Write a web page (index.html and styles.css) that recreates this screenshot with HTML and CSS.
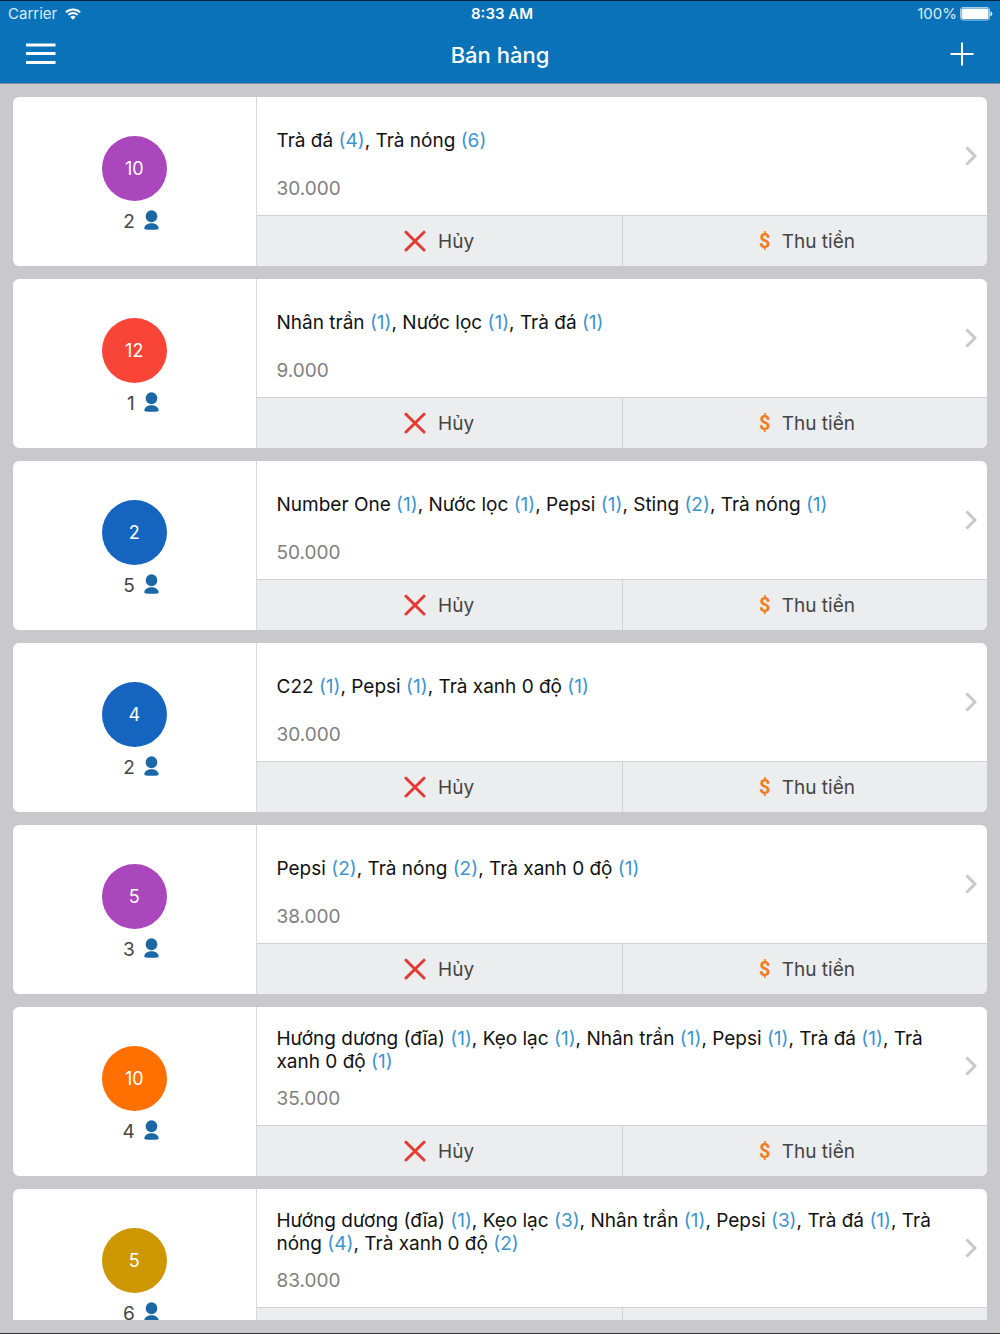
FILE: index.html
```
<!DOCTYPE html>
<html lang="vi">
<head>
<meta charset="utf-8">
<meta name="viewport" content="width=device-width, initial-scale=1">
<title>Bán hàng</title>
<link rel="stylesheet" href="styles.css">
</head>
<body>
<svg class="sprite" width="0" height="0" aria-hidden="true">
  <symbol id="person" viewBox="0 0 15 20"><ellipse cx="7.5" cy="6.3" rx="5.8" ry="6"/><path d="M.3 18C.8 15 3.800 13.200 7.500 13.200s6.700 1.800 7.200 4.800c.1.800-.5 1.300-1.400 1.400-3.800.5-7.800.5-11.600 0-.9-.1-1.500-.6-1.400-1.400z"/></symbol>
  <symbol id="cross" viewBox="0 0 22 22"><path d="M2 2.200l18 17.800M20 2.200L2 20"/></symbol>
  <symbol id="chevron" viewBox="0 0 12 20"><path d="M1.500 1.500L10 10l-8.500 8.500"/></symbol>
</svg>
<div class="app">
  <header class="header">
    <div class="status">
      <span class="status-left">Carrier
        <svg class="wifi" viewBox="0 0 16 12" aria-hidden="true"><path d="M.9 4.300a10.200 10.200 0 0 1 14.200 0M3.400 6.900a6.600 6.600 0 0 1 9.200 0"/><path class="dot" d="M8 11.800L5.300 9a3.900 3.900 0 0 1 5.400 0z"/></svg>
      </span>
      <span class="clock">8:33 AM</span>
      <span class="status-right">100%
        <svg class="battery" viewBox="0 0 33 14" aria-hidden="true"><rect class="shell" x=".5" y=".5" width="29" height="12.500" rx="2.500"/><rect x="1.500" y="1.500" width="27" height="10.500" rx="1.500"/><path d="M30.500 4.500c2.400.7 2.400 4 0 4.700z"/></svg>
      </span>
    </div>
    <nav class="nav">
      <button class="nav-button" type="button" aria-label="Menu"><svg class="menu-icon" viewBox="0 0 30 22"><path d="M0 2h29.500M0 10.500h29.500M0 19.500h29.500"/></svg></button>
      <h1 class="title">Bán hàng</h1>
      <button class="nav-button nav-add" type="button" aria-label="Thêm"><svg class="plus-icon" viewBox="0 0 24 24"><path d="M12 .5v23M.5 12h23"/></svg></button>
    </nav>
  </header>
  <main class="orders">
    <article class="card">
      <div class="table-info"><span class="badge purple">10</span><span class="guests"><span>2</span><svg class="person"><use href="#person"/></svg></span></div>
      <div class="order">
        <a class="detail" href="#"><span class="items"><span>Trà đá <b>(4)</b>, Trà nóng <b>(6)</b></span></span><span class="price">30.000</span><svg class="chevron"><use href="#chevron"/></svg></a>
        <div class="actions"><button class="action" type="button"><svg class="cross"><use href="#cross"/></svg>Hủy</button><button class="action" type="button"><span class="cash" aria-hidden="true">$</span>Thu tiền</button></div>
      </div>
    </article>
    <article class="card">
      <div class="table-info"><span class="badge red">12</span><span class="guests"><span>1</span><svg class="person"><use href="#person"/></svg></span></div>
      <div class="order">
        <a class="detail" href="#"><span class="items"><span>Nhân trần <b>(1)</b>, Nước lọc <b>(1)</b>, Trà đá <b>(1)</b></span></span><span class="price">9.000</span><svg class="chevron"><use href="#chevron"/></svg></a>
        <div class="actions"><button class="action" type="button"><svg class="cross"><use href="#cross"/></svg>Hủy</button><button class="action" type="button"><span class="cash" aria-hidden="true">$</span>Thu tiền</button></div>
      </div>
    </article>
    <article class="card">
      <div class="table-info"><span class="badge blue">2</span><span class="guests"><span>5</span><svg class="person"><use href="#person"/></svg></span></div>
      <div class="order">
        <a class="detail" href="#"><span class="items"><span>Number One <b>(1)</b>, Nước lọc <b>(1)</b>, Pepsi <b>(1)</b>, Sting <b>(2)</b>, Trà nóng <b>(1)</b></span></span><span class="price">50.000</span><svg class="chevron"><use href="#chevron"/></svg></a>
        <div class="actions"><button class="action" type="button"><svg class="cross"><use href="#cross"/></svg>Hủy</button><button class="action" type="button"><span class="cash" aria-hidden="true">$</span>Thu tiền</button></div>
      </div>
    </article>
    <article class="card">
      <div class="table-info"><span class="badge blue">4</span><span class="guests"><span>2</span><svg class="person"><use href="#person"/></svg></span></div>
      <div class="order">
        <a class="detail" href="#"><span class="items"><span>C22 <b>(1)</b>, Pepsi <b>(1)</b>, Trà xanh 0 độ <b>(1)</b></span></span><span class="price">30.000</span><svg class="chevron"><use href="#chevron"/></svg></a>
        <div class="actions"><button class="action" type="button"><svg class="cross"><use href="#cross"/></svg>Hủy</button><button class="action" type="button"><span class="cash" aria-hidden="true">$</span>Thu tiền</button></div>
      </div>
    </article>
    <article class="card">
      <div class="table-info"><span class="badge purple">5</span><span class="guests"><span>3</span><svg class="person"><use href="#person"/></svg></span></div>
      <div class="order">
        <a class="detail" href="#"><span class="items"><span>Pepsi <b>(2)</b>, Trà nóng <b>(2)</b>, Trà xanh 0 độ <b>(1)</b></span></span><span class="price">38.000</span><svg class="chevron"><use href="#chevron"/></svg></a>
        <div class="actions"><button class="action" type="button"><svg class="cross"><use href="#cross"/></svg>Hủy</button><button class="action" type="button"><span class="cash" aria-hidden="true">$</span>Thu tiền</button></div>
      </div>
    </article>
    <article class="card">
      <div class="table-info"><span class="badge orange">10</span><span class="guests"><span>4</span><svg class="person"><use href="#person"/></svg></span></div>
      <div class="order">
        <a class="detail" href="#"><span class="items"><span>Hướng dương (đĩa) <b>(1)</b>, Kẹo lạc <b>(1)</b>, Nhân trần <b>(1)</b>, Pepsi <b>(1)</b>, Trà đá <b>(1)</b>, Trà xanh 0 độ <b>(1)</b></span></span><span class="price">35.000</span><svg class="chevron"><use href="#chevron"/></svg></a>
        <div class="actions"><button class="action" type="button"><svg class="cross"><use href="#cross"/></svg>Hủy</button><button class="action" type="button"><span class="cash" aria-hidden="true">$</span>Thu tiền</button></div>
      </div>
    </article>
    <article class="card">
      <div class="table-info"><span class="badge gold">5</span><span class="guests"><span>6</span><svg class="person"><use href="#person"/></svg></span></div>
      <div class="order">
        <a class="detail" href="#"><span class="items"><span>Hướng dương (đĩa) <b>(1)</b>, Kẹo lạc <b>(3)</b>, Nhân trần <b>(1)</b>, Pepsi <b>(3)</b>, Trà đá <b>(1)</b>, Trà nóng <b>(4)</b>, Trà xanh 0 độ <b>(2)</b></span></span><span class="price">83.000</span><svg class="chevron"><use href="#chevron"/></svg></a>
        <div class="actions"><button class="action" type="button"><svg class="cross"><use href="#cross"/></svg>Hủy</button><button class="action" type="button"><span class="cash" aria-hidden="true">$</span>Thu tiền</button></div>
      </div>
    </article>
  </main>
</div>
</body>
</html>
```
FILE: styles.css
```
* { box-sizing: border-box; }
body { margin: 0; background: #c8c8cd; font: 19px/23px Inter, "Liberation Sans", sans-serif; color: #111; }
button { border: 0; padding: 0; background: none; font: inherit; color: inherit; cursor: pointer; }
svg { display: block; flex: none; }
.sprite { position: absolute; }

.app { display: flex; flex-direction: column; height: 100vh; padding-bottom: 13px; border-top: 1px solid #06233c; border-bottom: 1px solid #333337; }

.header { flex: none; background: #0972b9; color: #fff; border-bottom: 1px solid #8c8a98; }
.status { display: grid; grid-template-columns: 1fr auto 1fr; align-items: center; height: 26px; padding: 0 7px 0 8px; font-size: 15px; line-height: 20px; }
.status-left, .status-right { display: flex; align-items: center; gap: 8px; color: #dcecf8; }
.status-right { justify-content: flex-end; gap: 3px; }
.clock { font-weight: 600; padding-left: 3px; }
.wifi { width: 16px; height: 12px; fill: none; stroke: #fff; stroke-width: 2; }
.wifi .dot { fill: #fff; stroke: none; }
.battery { width: 33px; height: 14px; fill: #fff; }
.battery .shell { fill: none; stroke: #a9d0ec; }
.nav { display: grid; grid-template-columns: 1fr auto 1fr; align-items: center; height: 56px; padding: 0 26px; }
.nav-button { justify-self: start; padding-bottom: 2px; }
.nav-add { justify-self: end; }
.title { margin: 0; font-size: 22px; line-height: 28px; font-weight: 500; }
.menu-icon { width: 30px; height: 22px; stroke: #fff; stroke-width: 3; }
.plus-icon { width: 24px; height: 24px; stroke: #fff; stroke-width: 2; }

.orders { flex: 1; min-height: 0; overflow: hidden; display: flex; flex-direction: column; gap: 13px; padding: 13px 13px 0; }
.card { flex: none; display: grid; grid-template-columns: 1fr 3fr; min-height: 169px; border-radius: 6px; overflow: hidden; background: #fff; }

.table-info { display: flex; flex-direction: column; align-items: center; gap: 9px; padding-top: 39px; border-right: 1px solid #d9d9dd; }
.badge { display: grid; place-items: center; width: 65px; height: 65px; border-radius: 50%; color: #fff; font-size: 18px; }
.purple { background: #ab47bc; }
.red { background: #f84538; }
.blue { background: #1565c0; }
.orange { background: #ff7000; }
.gold { background: #cc9700; }
.guests { display: grid; grid-template-columns: 1fr 1fr; column-gap: 9px; align-self: stretch; align-items: start; padding-left: 10px; text-align: right; color: #444; }
.person { width: 15px; height: 20px; fill: #1c68a6; }

.order { display: flex; flex-direction: column; }
.detail { flex: 1; display: grid; grid-template-columns: 1fr 12px; grid-template-rows: auto 1fr; gap: 3px 24px; align-items: center; padding: 12px 10px 12px 20px; color: inherit; text-decoration: none; }
.items { display: flex; align-items: center; min-height: 62px; }
.items b { font-weight: 400; color: #3c94cf; }
.price { grid-column: 1; color: #808080; }
.chevron { grid-column: 2; grid-row: 1 / 3; width: 12px; height: 20px; fill: none; stroke: #c7c7cc; stroke-width: 3; }

.actions { display: grid; grid-template-columns: 1fr 1fr; height: 51px; border-top: 1px solid #d2d2d5; background: #ecedef; color: #444; }
.action { display: flex; align-items: center; justify-content: center; }
.action + .action { border-left: 1px solid #d2d2d5; }
.cross { width: 22px; height: 22px; margin-right: 12px; fill: none; stroke: #e23b36; stroke-width: 3; stroke-linecap: round; }
.cash { width: 20px; margin-right: 7px; color: #f17b26; font-family: Roboto, sans-serif; font-size: 20px; font-weight: 700; }
```
